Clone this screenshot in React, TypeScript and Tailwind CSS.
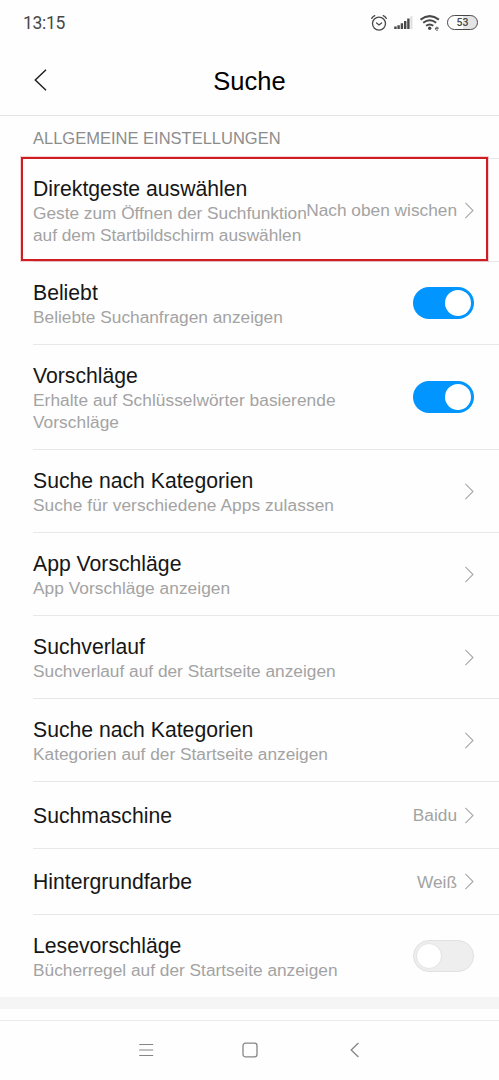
import { useState } from "react";
import clsx from "clsx";

type Setting = {
  id: string;
  title: string;
  description?: string;
  value?: string;
  toggle?: boolean;
  highlighted?: boolean;
  height: string;
  tracking?: string;
};

const SETTINGS: Setting[] = [
  {
    id: "gesture",
    title: "Direktgeste auswählen",
    description: "Geste zum Öffnen der Suchfunktion\nauf dem Startbildschirm auswählen",
    value: "Nach oben wischen",
    highlighted: true,
    height: "h-[103px]",
    tracking: "tracking-[-0.02px]",
  },
  { id: "popular", title: "Beliebt", description: "Beliebte Suchanfragen anzeigen", toggle: true, height: "h-[83px]" },
  {
    id: "suggestions",
    title: "Vorschläge",
    description: "Erhalte auf Schlüsselwörter basierende\nVorschläge",
    toggle: true,
    height: "h-[105px]",
    tracking: "tracking-[0.05px]",
  },
  {
    id: "categories",
    title: "Suche nach Kategorien",
    description: "Suche für verschiedene Apps zulassen",
    height: "h-[83px]",
    tracking: "tracking-[0.09px]",
  },
  { id: "apps", title: "App Vorschläge", description: "App Vorschläge anzeigen", height: "h-[83px]", tracking: "tracking-[0.05px]" },
  { id: "history", title: "Suchverlauf", description: "Suchverlauf auf der Startseite anzeigen", height: "h-[83px]" },
  { id: "home", title: "Suche nach Kategorien", description: "Kategorien auf der Startseite anzeigen", height: "h-[83px]" },
  { id: "engine", title: "Suchmaschine", value: "Baidu", height: "h-[67px]" },
  { id: "background", title: "Hintergrundfarbe", value: "Weiß", height: "h-[66px]" },
  { id: "reading", title: "Lesevorschläge", description: "Bücherregel auf der Startseite anzeigen", toggle: false, height: "h-[82px]" },
];

function StatusBar() {
  return (
    <div className="flex h-[45px] items-center justify-between pr-[21px] pl-[23px] text-[#484848]">
      <span className="pt-0.5 font-[Roboto,sans-serif] text-[17.5px] tracking-[-0.3px]">13:15</span>
      <div className="flex items-center">
        <svg width="18" height="18" viewBox="0 0 18 18" fill="none" stroke="currentColor" strokeWidth="1.3" strokeLinecap="round">
          <circle cx="8" cy="9.6" r="6.5" />
          <path d="M.7 4.4Q1.7 2.5 3.8 1.7M15.3 4.4Q14.3 2.5 12.2 1.7M5.6 9L8 10.9L10.6 9" />
        </svg>
        <svg className="ml-[5px]" width="20" height="16" viewBox="0 0 20 16" fill="currentColor">
          <path d="M.2 11.6h2.5V14H.2zM3.4 10.2h2.4V14H3.4zM6.7 8.2h2.4V14H6.7zM10 6h2.4v8H10zM13.2 3.4h2.4V14h-2.4z" />
          <path d="M16.4 1.2h2V14h-2z" fill="#ddd" />
        </svg>
        <svg className="ml-1.5" width="20" height="18" viewBox="0 0 20 18" fill="none" stroke="currentColor" strokeWidth="2">
          <path d="M.5 5.6Q9.7-1.4 18.9 5.6" />
          <path d="M3.2 8.8Q9.7 3.8 16.2 8.8" />
          <path d="M6.1 11.8Q9.7 9.1 13.3 11.8" />
          <circle cx="9.7" cy="14.3" r="1.7" fill="currentColor" stroke="none" />
          <path d="M15.2 14.4h3.2M18 15.8a1.5 1.5 0 1 1 .4-1.4" strokeWidth=".9" />
        </svg>
        <div className="ml-[7px] flex h-[15px] w-[31px] items-center justify-center rounded-full border-[1.5px] border-[#484848] bg-linear-to-r from-white from-52% to-[#e4e4e4] to-52% pt-px font-[Roboto,sans-serif] text-[10.5px] leading-none font-medium">
          53
        </div>
      </div>
    </div>
  );
}

function Chevron() {
  return (
    <svg className="ml-[8px] shrink-0" width="9" height="17" viewBox="0 0 9 17" fill="none" stroke="#a8a8a8" strokeWidth="1.1">
      <path d="M.4 .8L8 8.5L.4 16.2" />
    </svg>
  );
}

function Toggle({ initial }: { initial: boolean }) {
  const [on, setOn] = useState(initial);
  return (
    <button
      type="button"
      role="switch"
      aria-checked={on}
      onClick={() => setOn(!on)}
      className={clsx(
        "flex h-8 w-[61px] shrink-0 items-center rounded-full",
        on ? "justify-end bg-[#0095ff] pr-[3px]" : "border border-[#e1e1e1] bg-[#eeeeee] pl-[2px]"
      )}
    >
      <span className={clsx("size-[26px] rounded-full bg-white", !on && "border border-[#e4e4e4]")} />
    </button>
  );
}

function SettingRow({ setting }: { setting: Setting }) {
  const { title, description, value, toggle, highlighted, height, tracking } = setting;
  return (
    <div className={clsx("relative flex items-center border-b border-[#e8e8e8] pr-[25px] last:border-b-0", height)}>
      <div className="min-w-0 flex-1 whitespace-pre">
        <div className="text-[21.2px] leading-[27px] text-[#161616]">{title}</div>
        {description && <div className={clsx("text-[17.3px] leading-[22px] text-[#a3a3a3]", tracking)}>{description}</div>}
      </div>
      {value && <span className="text-[17.3px] leading-6 whitespace-nowrap text-[#a3a3a3]">{value}</span>}
      {toggle === undefined ? <Chevron /> : <Toggle initial={toggle} />}
      {highlighted && (
        <div className="pointer-events-none absolute -top-[2px] right-[11px] bottom-0 -left-3 border-2 border-[#cf1d22] ring-1 ring-[#cf1d22]/20" />
      )}
    </div>
  );
}

function NavBar() {
  return (
    <nav className="flex h-[60px] items-center justify-center gap-[88px] border-t border-[#ebebeb] pb-0.5 text-[#858585]">
      <svg width="16" height="16" viewBox="0 0 16 16" fill="none" stroke="currentColor" strokeWidth="1.2">
        <path d="M1.2 2.5h14M1.2 8h14M1.2 13.5h14" />
      </svg>
      <svg width="16" height="16" viewBox="0 0 16 16" fill="none" stroke="currentColor" strokeWidth="1.3">
        <rect x="1" y="1.2" width="14" height="13.6" rx="2.4" />
      </svg>
      <svg width="16" height="16" viewBox="0 0 16 16" fill="none" stroke="currentColor" strokeWidth="1.3">
        <path d="M12.4 1L5.2 8L12.4 15" />
      </svg>
    </nav>
  );
}

export default function App() {
  return (
    <div className="flex h-[1080px] w-[499px] flex-col overflow-hidden bg-[#fefefe] font-['Liberation_Sans',Arial,sans-serif]">
      <StatusBar />
      <header className="relative flex h-[71px] items-center justify-center border-b border-[#e4e4e4]">
        <button type="button" aria-label="Zurück" className="absolute left-[33px]">
          <svg width="15" height="24" viewBox="0 0 15 24" fill="none" stroke="#222" strokeWidth="1.5">
            <path d="M13 1.8L2.3 12L13 22.2" />
          </svg>
        </button>
        <h1 className="pt-0.5 text-[25.5px] leading-8 text-black">Suche</h1>
      </header>
      <main className="flex-1">
        <h2 className="ml-[33px] flex h-[43px] items-center border-b border-[#e8e8e8] pt-0.5 text-[16.5px] text-[#8c8c8c]">
          ALLGEMEINE EINSTELLUNGEN
        </h2>
        <div className="ml-[33px]">
          {SETTINGS.map((setting) => (
            <SettingRow key={setting.id} setting={setting} />
          ))}
        </div>
        <div className="h-3 bg-[#f5f5f5]" />
      </main>
      <NavBar />
    </div>
  );
}
